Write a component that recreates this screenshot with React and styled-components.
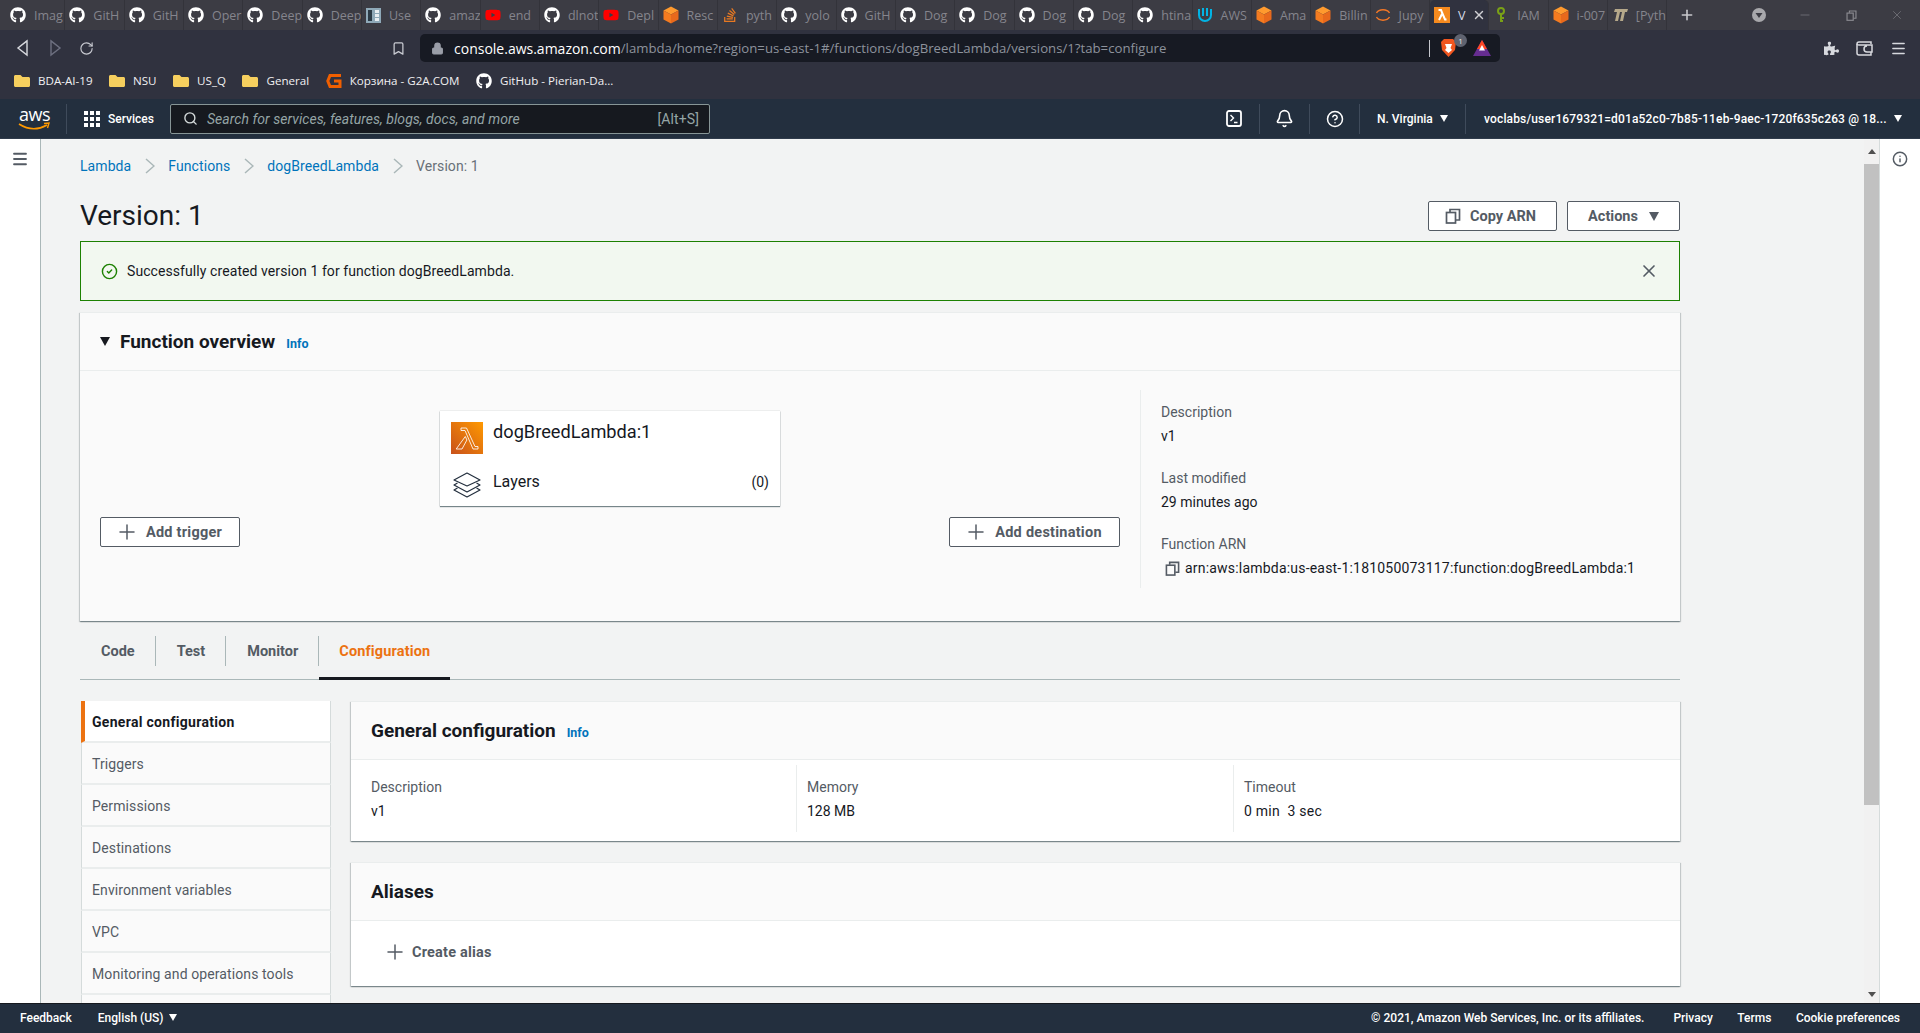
import React from 'react';
import styled, { createGlobalStyle } from 'styled-components';
import { FaGithub, FaStackOverflow, FaYoutube, FaFolder, FaPuzzlePiece } from 'react-icons/fa';
import { Plus, X, Minus, RotateCw, Bookmark, Lock, Search, Menu, Bell, CircleHelp, CircleCheck, Info } from 'lucide-react';

const Global = createGlobalStyle`
  html, body { margin: 0; padding: 0; height: 100%; overflow: hidden; }
  * { box-sizing: border-box; }
  #root { height: 100%; }
`;

const Page = styled.div`
  height: 1033px; display: flex; flex-direction: column; overflow: hidden;
  font-family: Roboto, "Liberation Sans", sans-serif; font-size: 14px; color: #16191f; background: #fff;
`;

/* Browser chrome */
const TabStrip = styled.div`
  height: 30px; flex: none; background: #3c3c44; display: flex; align-items: stretch; padding-left: 6px;
  font-family: "Open Sans", sans-serif; font-size: 12.5px; color: #85858d;
`;
const Tab = styled.div`
  width: 59.33px; flex: none; display: flex; align-items: center; gap: 8px; padding-left: 4px; overflow: hidden;
  white-space: nowrap; border-right: 1px solid #33333a;
  background: ${p => (p.$active ? '#30323f' : 'transparent')};
  border-radius: ${p => (p.$active ? '5px 5px 0 0' : '0')};
  color: ${p => (p.$active ? '#d8dde8' : '#85858d')};
  svg { flex: none; }
`;
const TabClose = styled.span`display: flex; margin-left: -1px; color: #d0d0d4;`;
const NewTab = styled.div`width: 40px; display: flex; align-items: center; justify-content: center; color: #c8c8cc;`;
const WindowControls = styled.div`margin-left: auto; display: flex; align-items: center; color: #8a8a90;`;
const WinBtn = styled.div`width: 46px; display: flex; align-items: center; justify-content: center; height: 30px;`;
const Toolbar = styled.div`
  height: 36px; flex: none; background: #30323f; display: flex; align-items: center; color: #c9cbd2;
`;
const NavBtns = styled.div`display: flex; width: 376px; padding-left: 13px; gap: 14px; align-items: center;`;
const BookmarkBtn = styled.div`width: 44px; display: flex; justify-content: center; color: #c9cbd2;`;
const UrlBar = styled.div`
  width: 1080px; height: 28px; background: #171a23; border-radius: 5px; display: flex; align-items: center;
  padding: 0 9px 0 11px; font-family: "Open Sans", sans-serif; font-size: 14px; color: #8d929c; white-space: nowrap;
`;
const UrlHost = styled.span`color: #fff;`;
const UrlRest = styled.span`font-size: 13.2px;`;
const LockWrap = styled.span`display: flex; margin-right: 10px; color: #9a9ea8;`;
const UrlIcons = styled.div`margin-left: auto; display: flex; align-items: center; gap: 12px;`;
const UrlSep = styled.div`width: 1px; height: 17px; background: #c5c7cd; margin-right: -1px;`;
const ShieldWrap = styled.div`position: relative; display: flex; margin-right: 5px;`;
const Badge = styled.span`
  position: absolute; top: -5px; right: -11px; width: 13px; height: 13px; border-radius: 50%; background: #5f6370; color: #eee;
  font-size: 8px; display: flex; align-items: center; justify-content: center;
`;
const ToolRight = styled.div`margin-left: auto; display: flex; align-items: center; gap: 17px; padding-right: 13px; color: #d7d9de;`;
const Bookmarks = styled.div`
  height: 33px; flex: none; background: #30323f; display: flex; align-items: center; padding: 0 0 4px 14px; gap: 16.5px;
  font-family: "Open Sans", sans-serif; font-size: 11.6px; color: #f0f0f2;
`;
const BookmarkItem = styled.div`display: flex; align-items: center; gap: 8px; white-space: nowrap; svg { flex: none; }`;

/* AWS nav */
const AwsNav = styled.div`
  height: 40px; flex: none; background: #232f3e; display: flex; align-items: center; color: #fff; font-size: 12px; font-weight: 500;
  border-bottom: 1px solid #2f3b4b;
`;
const Logo = styled.div`
  width: 67px; height: 30px; border-right: 1px solid #3f4b5b; padding-left: 19px; position: relative;
  font-family: "Open Sans", sans-serif; font-size: 18px; line-height: 20px; font-weight: 400; letter-spacing: -0.5px;
`;
const Smile = styled.svg`position: absolute; left: 18px; top: 18px;`;
const Services = styled.div`display: flex; align-items: center; gap: 8px; margin-left: 17px; width: 86px;`;
const SearchBox = styled.div`
  width: 540px; height: 30px; background: #16191f; border: 1px solid #879596; border-radius: 2px; display: flex; align-items: center;
  padding: 0 10px 0 12px; gap: 9px; font-size: 14px; font-weight: 400; color: #95a5a6;
`;
const SearchText = styled.span`font-style: italic; flex: 1; letter-spacing: 0.05px;`;
const SearchKey = styled.span`letter-spacing: 0.1px;`;
const NavRight = styled.div`margin-left: auto; display: flex; align-items: center; height: 30px;`;
const NavCell = styled.div`
  width: ${p => p.$w}px; height: 30px; display: flex; align-items: center; justify-content: ${p => (p.$pad ? 'flex-start' : 'center')};
  padding-left: ${p => p.$pad || 0}px; border-left: ${p => (p.$first ? 'none' : '1px solid #3f4b5b')}; white-space: nowrap; gap: 7px;
  letter-spacing: ${p => p.$ls || 0}px;
`;
const Caret = styled.span`
  display: inline-block; width: 0; height: 0; border-left: ${p => p.$s || 4}px solid transparent; border-right: ${p => p.$s || 4}px solid transparent;
  border-top: ${p => (p.$s ? 9 : 7)}px solid ${p => p.$c || '#fff'}; flex: none;
`;

/* Body */
const Body = styled.div`flex: 1; min-height: 0; display: flex;`;
const LeftRail = styled.div`width: 41px; flex: none; background: #fff; border-right: 1px solid #aab7b8; padding: 11px 0 0 11px; color: #545b64;`;
const Content = styled.main`flex: 1; min-width: 0; background: #f2f3f3; overflow: hidden; padding: 16px 184px 0 39px;`;
const Crumbs = styled.nav`height: 22px; display: flex; align-items: center; color: #687078; letter-spacing: 0.08px;`;
const Crumb = styled.a`color: #0073bb;`;
const CrumbSep = styled.svg`margin: 0 13.5px; flex: none;`;
const TitleRow = styled.div`display: flex; align-items: center; margin-top: 24px; height: 30px;`;
const Title = styled.h1`font-size: 28px; font-weight: 400; margin: 0; flex: 1; line-height: 30px; color: #16191f;`;
const Btn = styled.button`
  height: 30px; padding: 0 ${p => p.$pr || 0}px 0 0; background: #fff; border: 1px solid #545b64; border-radius: 2px; color: #545b64;
  font: 700 14.5px Roboto, sans-serif; letter-spacing: ${p => p.$ls || 0}px; display: flex; align-items: center; gap: ${p => p.$gap || 9}px; margin-left: ${p => p.$ml || 0}px;
  white-space: nowrap; width: ${p => p.$w}px; justify-content: center;
`;
const Flash = styled.div`
  margin-top: 10px; height: 60px; background: #f2f8f0; border: 1px solid #1d8102; display: flex; align-items: center;
  padding: 0 20px 0 20px; gap: 9px; color: #16191f;
`;
const FlashText = styled.span`flex: 1; letter-spacing: 0.08px;`;
const Card = styled.section`
  background: #fafafa; box-shadow: 0 1px 1px 0 rgba(0,28,36,.3), 1px 1px 1px 0 rgba(0,28,36,.15), -1px 1px 1px 0 rgba(0,28,36,.15);
  border-top: 1px solid #eaeded; margin-top: ${p => p.$mt || 0}px; height: ${p => p.$h}px;
`;
const CardHead = styled.div`
  height: 58px; border-bottom: 1px solid #eaeded; display: flex; align-items: center; padding-left: 20px; background: #fafafa;
`;
const HeadText = styled.h2`font-size: 19px; font-weight: 700; margin: 0; line-height: 22px; color: #16191f;`;
const InfoLink = styled.a`font-size: 12.5px; font-weight: 700; color: #0073bb; margin-left: 11px; margin-top: 3px;`;
const CollapseCaret = styled.span`
  width: 0; height: 0; border-left: 5.5px solid transparent; border-right: 5.5px solid transparent; border-top: 9px solid #16191f; margin-right: 10px;
`;
const OverviewBody = styled.div`display: flex; padding-left: 20px;`;
const Diagram = styled.div`width: 1020px; flex: none; padding-top: 40px; display: flex; flex-direction: column;`;
const FnBox = styled.div`
  width: 340px; height: 95px; align-self: center; background: #fff; box-shadow: 0 1px 1px 0 rgba(0,28,36,.5), 0 0 1px 0 rgba(0,28,36,.3);
  padding: 11px 11px 0; display: grid; grid-template-columns: 32px 1fr auto; column-gap: 10px; grid-template-rows: 45px 32px;
`;
const FnName = styled.div`font-size: 18.2px; line-height: 21px; margin-top: -1px;`;
const LayersIconWrap = styled.div`padding: 5px 0 0 2px; display: flex;`;
const LayersText = styled.div`font-size: 16px; line-height: 20px; padding-top: 5px;`;
const LayersCount = styled.div`line-height: 20px; padding-top: 5px;`;
const BtnRow = styled.div`display: flex; justify-content: space-between; margin-top: 11px;`;
const Details = styled.div`margin: 19px 0 0 20px; height: 198px; border-left: 1px solid #eaeded; padding: 10px 0 0 20px;`;
const Label = styled.div`color: #545b64; line-height: 24px;`;
const Value = styled.div`line-height: 24px; margin-bottom: 18px; display: flex; align-items: center; gap: 5px; white-space: ${p => (p.$pre ? 'pre' : 'nowrap')}; color: #16191f; letter-spacing: ${p => p.$ls || 0}px;`;
const ArnIcon = styled.span`display: flex; margin-left: 4px;`;

const Tabs = styled.div`margin-top: 15px; padding-bottom: 13px; display: flex; border-bottom: 1px solid #aab7b8; height: 44px;`;
const TabItem = styled.div`
  height: 30px; padding: ${p => (p.$active ? '0 20px' : '0 20px 0 21px')}; line-height: 32px; font-weight: 700; font-size: 14.5px; position: relative;
  color: ${p => (p.$active ? '#ec7211' : '#545b64')}; border-right: ${p => (p.$active ? 'none' : '1px solid #aab7b8')};
  letter-spacing: ${p => (p.$active ? 0.15 : 0)}px;
  &::after {
    content: ''; display: ${p => (p.$active ? 'block' : 'none')}; position: absolute; left: 0; right: 0; top: 41px; height: 3px; background: #16191f;
  }
`;
const ConfigGrid = styled.div`display: grid; grid-template-columns: 250px 1fr; column-gap: 20px; margin-top: 21px; padding-left: 1px;`;
const SideNav = styled.div`display: flex; flex-direction: column;`;
const SideItem = styled.div`
  height: 42px; flex: none; padding: 1px 0 0 ${p => (p.$active ? 7 : 10)}px; display: flex; align-items: center; letter-spacing: ${p => (p.$active ? 0.3 : 0.1)}px;
  background: ${p => (p.$active ? '#fff' : '#fafafa')}; border-bottom: 2px solid #eaeded; border-right: 1px solid #d5dbdb;
  border-left: ${p => (p.$active ? '4px solid #ec7211' : '1px solid #d5dbdb')};
  font-weight: ${p => (p.$active ? 700 : 400)}; color: ${p => (p.$active ? '#16191f' : '#545b64')};
`;
const Main = styled.div`display: flex; flex-direction: column;`;
const FieldRow = styled.div`display: grid; grid-template-columns: 445px 437px 1fr; background: #fff; height: 81px; padding-top: 5px;`;
const Field = styled.div`
  height: 67px; padding: 10px 0 0 ${p => (p.$first ? 20 : 10)}px; border-left: ${p => (p.$first ? 'none' : '1px solid #eaeded')};
`;
const AliasBody = styled.div`background: #fff; height: 65px; display: flex; align-items: center; padding: 0 0 3px 32px; gap: 5px; font-weight: 700; font-size: 14.5px; letter-spacing: 0.2px; color: #545b64;`;
const Scrollbar = styled.div`width: 16px; flex: none; background: #f1f1f1; border-right: 1px solid #d5dbdb; display: flex; flex-direction: column;`;
const Thumb = styled.div`height: 641px; background: #c1c1c1;`;
const ArrowBox = styled.div`height: 25px; display: flex; justify-content: center; align-items: center; flex: none;`;
const ArrowEnd = styled.div`flex: 1; display: flex; justify-content: center; align-items: flex-end; padding-bottom: 6px;`;
const ArrowUp = styled.span`width: 0; height: 0; border-left: 4px solid transparent; border-right: 4px solid transparent; border-bottom: 5px solid #505050;`;
const ArrowDown = styled.span`width: 0; height: 0; border-left: 4px solid transparent; border-right: 4px solid transparent; border-top: 5px solid #505050;`;
const RightRail = styled.div`width: 40px; flex: none; background: #fff; padding: 12px 0 0 12px; color: #545b64;`;
const Footer = styled.footer`
  height: 30px; flex: none; background: #232f3e; border-top: 1px solid #16191f; color: #fff; font-size: 12px; font-weight: 500; display: flex; align-items: center; padding: 0 20px 2px;
`;
const FootLang = styled.span`margin-left: 26px; display: flex; align-items: center; gap: 5px;`;
const FootRight = styled.div`margin-left: auto; display: flex; gap: 24.5px;`;
const FootCopy = styled.span`margin-right: 4.5px;`;

/* Drawings */
const Box = ({ c1 = '#ff9a2e', c2 = '#f47b20', c3 = '#e8691c' }) => (
  <svg width="16" height="18" viewBox="0 0 16 18">
    <path d="M8 0.5 15.5 4.5 8 8.5 .5 4.5z" fill={c1} />
    <path d="M.5 4.5 8 8.5V17.5L.5 13.5z" fill={c2} />
    <path d="M15.5 4.5 8 8.5V17.5L15.5 13.5z" fill={c3} />
  </svg>
);
const Yt = () => <FaYoutube size={16} color="#ff0000" />;
const Gh = () => <FaGithub size={16} color="#fff" />;
const Book = () => (
  <svg width="15" height="15" viewBox="0 0 15 15"><rect width="15" height="15" fill="#8fa9b8" /><rect x="2" y="2" width="4" height="11" fill="#2b3a45" /><rect x="9" y="2" width="4" height="3" fill="#e8eef2" /><rect x="9" y="6" width="4" height="3" fill="#e8eef2" /><rect x="9" y="10" width="4" height="3" fill="#e8eef2" /></svg>
);
const Udacity = () => (
  <svg width="16" height="16" viewBox="0 0 16 16" fill="none" stroke="#02b3e4" strokeWidth="2"><path d="M2 2v6a6 6 0 0 0 12 0V2" /><path d="M6 1v8M10 1v8" /></svg>
);
const Jupyter = () => (
  <svg width="16" height="16" viewBox="0 0 16 16" fill="none" stroke="#f37726" strokeWidth="1.5"><path d="M1.5 6A7 5 0 0 1 14.5 6" /><path d="M1.5 10A7 5 0 0 0 14.5 10" /></svg>
);
const LambdaFav = () => (
  <svg width="16" height="16" viewBox="0 0 16 16"><rect width="16" height="16" fill="#f58a1f" /><path d="M4.5 3H7L11 12.5H12.5M8 7 5 13" fill="none" stroke="#fff" strokeWidth="2" /></svg>
);
const Key = () => (
  <svg width="16" height="16" viewBox="0 0 16 16" fill="none" stroke="#7aa116" strokeWidth="2"><circle cx="8" cy="4" r="3" /><path d="M8 7v8M8 11h3M8 14h2" /></svg>
);
const PyFav = () => (
  <svg width="16" height="16" viewBox="0 0 16 16" fill="#b5a88a"><path d="M3 2h13l-1 3h-2l-2 9H8l2-9H8l-2 9H3l2-9H2z" /></svg>
);
const G2a = () => (
  <svg width="16" height="16" viewBox="0 0 16 16" fill="none" stroke="#f05f00" strokeWidth="3"><path d="M15 2.5H4L1.8 8 4 13.5H14V8H8" /></svg>
);
const Folder = () => <FaFolder size={16} color="#f6cf5e" />;
const CopyIcon = ({ c = '#545b64', s = 16 }) => (
  <svg width={s} height={s} viewBox="0 0 16 16" fill="none" stroke={c} strokeWidth="1.7"><rect x="1.5" y="4.5" width="9" height="10.5" /><path d="M5 4V1.5H14.5V12H11" /></svg>
);
const GridDots = () => (
  <svg width="16" height="16" viewBox="0 0 16 16" fill="#fff">
    {[0, 6, 12].flatMap(x => [0, 6, 12].map(y => <rect key={`${x}${y}`} x={x} y={y} width="4" height="4" />))}
  </svg>
);
const TermIcon = () => (
  <svg width="16" height="17" viewBox="0 0 16 17" fill="none" stroke="#fff" strokeWidth="1.8"><rect x="1" y="1" width="14" height="15" rx="2" /><path d="M4.5 5 7.5 8 4.5 11M8 12.5h3.5" strokeWidth="1.4" /></svg>
);
const LambdaBig = () => (
  <svg width="32" height="32" viewBox="0 0 32 32">
    <defs><linearGradient id="lg" x1="0" y1="1" x2="1" y2="0"><stop offset="0" stopColor="#c8511b" /><stop offset="1" stopColor="#ff9900" /></linearGradient></defs>
    <rect width="32" height="32" fill="url(#lg)" />
    <path d="M10 6h5.5L24 24.5h3V27h-5L14 8.5h-4zM14.3 14.5l1.6 3.5L11 27H5.2z" fill="none" stroke="#fff" strokeOpacity=".85" strokeWidth="1" strokeLinejoin="round" />
  </svg>
);
const LayersIcon = () => (
  <svg width="28" height="26" viewBox="0 0 28 26" fill="none" stroke="#232f3e" strokeWidth="1.2" strokeLinejoin="round">
    <path d="M14 1 27 8 14 14 1 8z" />
    <path d="M4.5 11 1 13 14 20 27 13 23.5 11" />
    <path d="M4.5 16 1 18 14 25 27 18 23.5 16" />
  </svg>
);
const Chevron = () => (
  <CrumbSep width="10" height="16" viewBox="0 0 10 16" fill="none" stroke="#aab7b8" strokeWidth="1.5"><path d="M1 1 9 8 1 15" /></CrumbSep>
);
const BraveShield = () => (
  <svg width="15" height="18" viewBox="0 0 15 18"><path d="M3 0h9l3 3-1 8-6.5 7L1 11 0 3z" fill="#f1561f" /><path d="M4 5h7l-1.5 4L11 11l-3.5 3L4 11l1.5-2z" fill="#fff" /></svg>
);
const BatTriangle = () => (
  <svg width="18" height="16" viewBox="0 0 18 16"><path d="M9 0 18 16H0z" fill="#662d91" /><path d="M9 0 14 9H4z" fill="#ff4724" /><path d="M9 5 12 10.5H6z" fill="#fff" /></svg>
);
const BackIcon = ({ c }) => <svg width="19" height="18" viewBox="0 0 11 14" fill="none" stroke={c} strokeWidth="1.1"><path d="M9 1.5 2 7l7 5.5z" /></svg>;
const FwdIcon = ({ c }) => <svg width="19" height="18" viewBox="0 0 11 14" fill="none" stroke={c} strokeWidth="1.1"><path d="M2 1.5 9 7l-7 5.5z" /></svg>;
const Wallet = () => (
  <svg width="17" height="15" viewBox="0 0 17 15" fill="none" stroke="#d7d9de" strokeWidth="1.5"><path d="M15 3V1H3Q1 1 1 3v9q0 2 2 2h12v-3" /><path d="M1 3q0 1 2 1h13v7h-5a3 3 0 0 1 0-6" /></svg>
);

const TABS = [
  [<Gh />, 'Imag'], [<Gh />, 'GitH'], [<Gh />, 'GitH'], [<Gh />, 'Oper'], [<Gh />, 'Deep'], [<Gh />, 'Deep'], [<Book />, 'Use'],
  [<Gh />, 'amaz'], [<Yt />, 'end'], [<Gh />, 'dlnot'], [<Yt />, 'Depl'], [<Box />, 'Resc'], [<FaStackOverflow size={16} color="#e87922" />, 'pyth'],
  [<Gh />, 'yolo'], [<Gh />, 'GitH'], [<Gh />, 'Dog'], [<Gh />, 'Dog'], [<Gh />, 'Dog'], [<Gh />, 'Dog'], [<Gh />, 'htina'],
  [<Udacity />, 'AWS'], [<Box />, 'Ama'], [<Box />, 'Billin'], [<Jupyter />, 'Jupy'],
];
const TABS2 = [[<Key />, 'IAM'], [<Box />, 'i-007'], [<PyFav />, '[Pyth']];
const SIDE = ['Triggers', 'Permissions', 'Destinations', 'Environment variables', 'VPC', 'Monitoring and operations tools', ''];

export default function App() {
  return (
    <Page>
      <Global />
      <TabStrip>
        {TABS.map(([icon, label], i) => <Tab key={i}>{icon}<span>{label}</span></Tab>)}
        <Tab $active><LambdaFav /><span>V</span><TabClose><X size={14} strokeWidth={2.4} /></TabClose></Tab>
        {TABS2.map(([icon, label], i) => <Tab key={i}>{icon}<span>{label}</span></Tab>)}
        <NewTab><Plus size={16} strokeWidth={2.4} /></NewTab>
        <WindowControls>
          <WinBtn><svg width="14" height="14" viewBox="0 0 14 14"><circle cx="7" cy="7" r="7" fill="#a8a8ac" /><path d="M3.5 5h7L7 10z" fill="#3c3c44" /></svg></WinBtn>
          <WinBtn><Minus size={14} strokeWidth={1} /></WinBtn>
          <WinBtn><CopyIcon c="#8a8a90" s={11} /></WinBtn>
          <WinBtn><X size={14} strokeWidth={1} /></WinBtn>
        </WindowControls>
      </TabStrip>
      <Toolbar>
        <NavBtns>
          <BackIcon c="#d7d9de" />
          <FwdIcon c="#6d7080" />
          <RotateCw size={15} strokeWidth={1.8} />
        </NavBtns>
        <BookmarkBtn><Bookmark size={15} strokeWidth={2} /></BookmarkBtn>
        <UrlBar>
          <LockWrap><Lock size={13} fill="#9a9ea8" strokeWidth={2} /></LockWrap>
          <UrlHost>console.aws.amazon.com</UrlHost>
          <UrlRest>/lambda/home?region=us-east-1#/functions/dogBreedLambda/versions/1?tab=configure</UrlRest>
          <UrlIcons>
            <UrlSep />
            <ShieldWrap><BraveShield /><Badge>1</Badge></ShieldWrap>
            <BatTriangle />
          </UrlIcons>
        </UrlBar>
        <ToolRight>
          <FaPuzzlePiece size={15} />
          <Wallet />
          <Menu size={17} />
        </ToolRight>
      </Toolbar>
      <Bookmarks>
        <BookmarkItem><Folder />BDA-AI-19</BookmarkItem>
        <BookmarkItem><Folder />NSU</BookmarkItem>
        <BookmarkItem><Folder />US_Q</BookmarkItem>
        <BookmarkItem><Folder />General</BookmarkItem>
        <BookmarkItem><G2a />Корзина - G2A.COM</BookmarkItem>
        <BookmarkItem><Gh />GitHub - Pierian-Da...</BookmarkItem>
      </Bookmarks>
      <AwsNav>
        <Logo>aws<Smile width="32" height="10" viewBox="0 0 32 10" fill="none"><path d="M1 2q14 9 28 1" stroke="#ff9900" strokeWidth="1.6" /><path d="M26 1.5 31 1 29.5 6" stroke="#ff9900" strokeWidth="1.4" /></Smile></Logo>
        <Services><GridDots />Services</Services>
        <SearchBox>
          <Search size={15} color="#d5dbdb" strokeWidth={2.2} />
          <SearchText>Search for services, features, blogs, docs, and more</SearchText>
          <SearchKey>[Alt+S]</SearchKey>
        </SearchBox>
        <NavRight>
          <NavCell $w={50} $first><TermIcon /></NavCell>
          <NavCell $w={50}><Bell size={19} strokeWidth={2} /></NavCell>
          <NavCell $w={50}><CircleHelp size={18} strokeWidth={2} /></NavCell>
          <NavCell $w={106} $pad={17}>N. Virginia<Caret /></NavCell>
          <NavCell $w={455} $pad={18} $ls={0.15}>voclabs/user1679321=d01a52c0-7b85-11eb-9aec-1720f635c263 @ 18...<Caret /></NavCell>
        </NavRight>
      </AwsNav>
      <Body>
        <LeftRail><Menu size={18} strokeWidth={2.4} /></LeftRail>
        <Content>
          <Crumbs>
            <Crumb>Lambda</Crumb><Chevron />
            <Crumb>Functions</Crumb><Chevron />
            <Crumb>dogBreedLambda</Crumb><Chevron />
            <span>Version: 1</span>
          </Crumbs>
          <TitleRow>
            <Title>Version: 1</Title>
            <Btn $w={129} $pr={4}><CopyIcon />Copy ARN</Btn>
            <Btn $w={113} $ml={10} $gap={11}>Actions<Caret $c="#545b64" $s={5} /></Btn>
          </TitleRow>
          <Flash>
            <CircleCheck size={17} color="#1d8102" strokeWidth={2} />
            <FlashText>Successfully created version 1 for function dogBreedLambda.</FlashText>
            <X size={20} color="#545b64" strokeWidth={2} />
          </Flash>
          <Card $mt={11} $h={309}>
            <CardHead><CollapseCaret /><HeadText>Function overview</HeadText><InfoLink>Info</InfoLink></CardHead>
            <OverviewBody>
              <Diagram>
                <FnBox>
                  <LambdaBig />
                  <FnName>dogBreedLambda:1</FnName>
                  <span />
                  <LayersIconWrap><LayersIcon /></LayersIconWrap>
                  <LayersText>Layers</LayersText>
                  <LayersCount>(0)</LayersCount>
                </FnBox>
                <BtnRow>
                  <Btn $w={140} $gap={7} $ls={0.25} $pr={3}><Plus size={24} strokeWidth={1.5} />Add trigger</Btn>
                  <Btn $w={171} $gap={7} $ls={0.25} $pr={3}><Plus size={24} strokeWidth={1.5} />Add destination</Btn>
                </BtnRow>
              </Diagram>
              <Details>
                <Label>Description</Label>
                <Value>v1</Value>
                <Label>Last modified</Label>
                <Value>29 minutes ago</Value>
                <Label>Function ARN</Label>
                <Value $ls={0.2}><ArnIcon><CopyIcon s={15} /></ArnIcon>arn:aws:lambda:us-east-1:181050073117:function:dogBreedLambda:1</Value>
              </Details>
            </OverviewBody>
          </Card>
          <Tabs>
            <TabItem>Code</TabItem>
            <TabItem>Test</TabItem>
            <TabItem>Monitor</TabItem>
            <TabItem $active>Configuration</TabItem>
          </Tabs>
          <ConfigGrid>
            <SideNav>
              <SideItem $active>General configuration</SideItem>
              {SIDE.map((s, i) => <SideItem key={i}>{s}</SideItem>)}
            </SideNav>
            <Main>
              <Card $h={140}>
                <CardHead><HeadText>General configuration</HeadText><InfoLink>Info</InfoLink></CardHead>
                <FieldRow>
                  <Field $first><Label>Description</Label><Value>v1</Value></Field>
                  <Field><Label>Memory</Label><Value>128 MB</Value></Field>
                  <Field><Label>Timeout</Label><Value $pre $ls={0.25}>0 min  3 sec</Value></Field>
                </FieldRow>
              </Card>
              <Card $mt={21} $h={124}>
                <CardHead><HeadText>Aliases</HeadText></CardHead>
                <AliasBody><Plus size={24} strokeWidth={1.5} />Create alias</AliasBody>
              </Card>
            </Main>
          </ConfigGrid>
        </Content>
        <Scrollbar>
          <ArrowBox><ArrowUp /></ArrowBox>
          <Thumb />
          <ArrowEnd><ArrowDown /></ArrowEnd>
        </Scrollbar>
        <RightRail><Info size={16} strokeWidth={2.2} /></RightRail>
      </Body>
      <Footer>
        <span>Feedback</span>
        <FootLang>English (US)<Caret /></FootLang>
        <FootRight>
          <FootCopy>© 2021, Amazon Web Services, Inc. or its affiliates.</FootCopy>
          <span>Privacy</span>
          <span>Terms</span>
          <span>Cookie preferences</span>
        </FootRight>
      </Footer>
    </Page>
  );
}
